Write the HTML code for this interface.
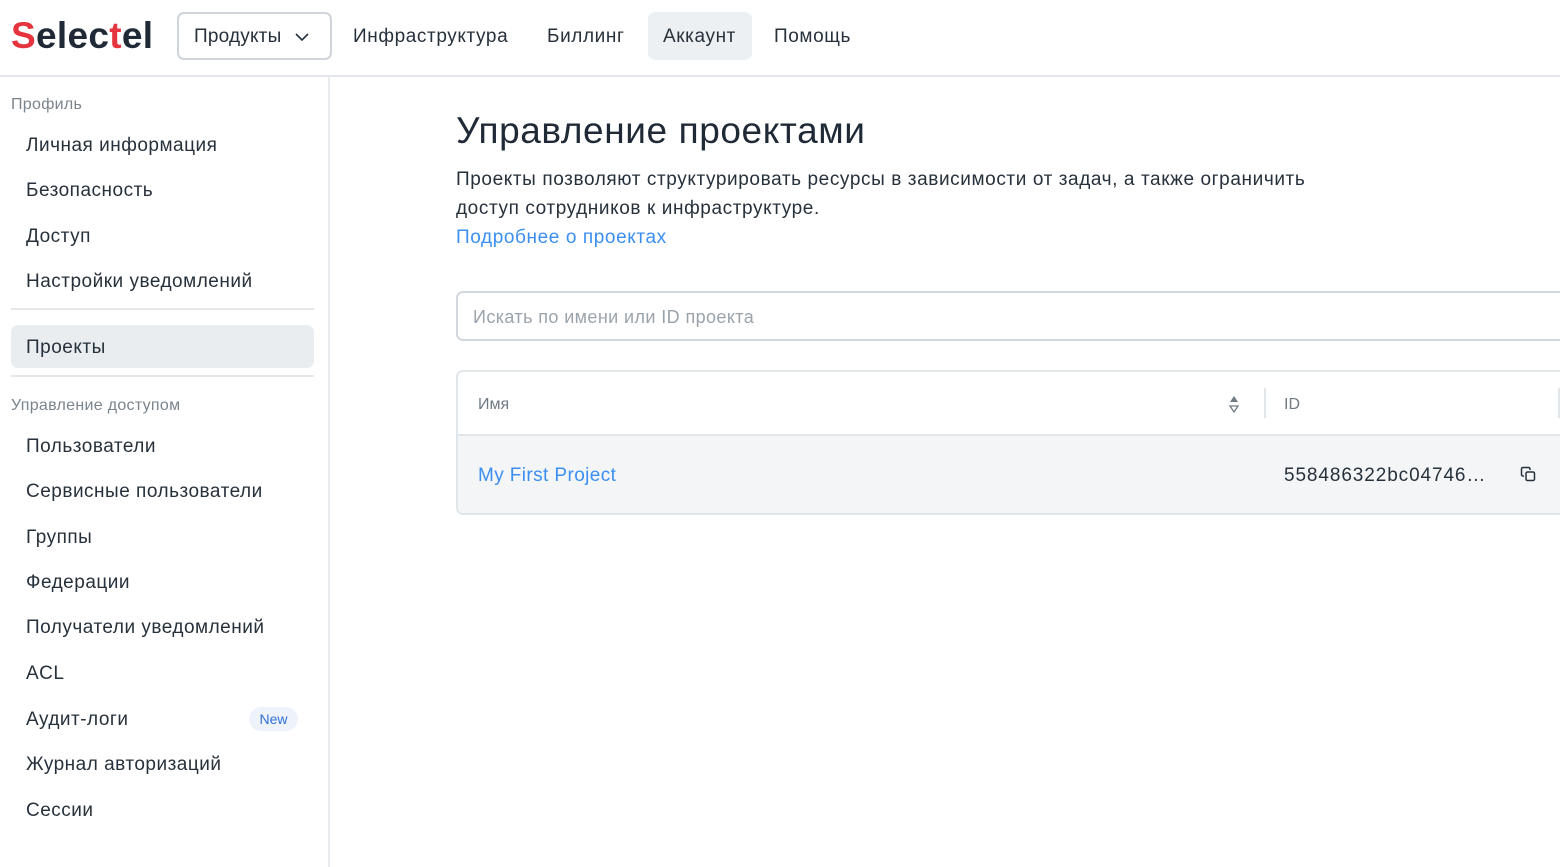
<!DOCTYPE html>
<html><head><meta charset="utf-8"><style>
*{box-sizing:border-box;margin:0;padding:0}
body{width:1560px;height:867px;overflow:hidden;background:#fff;font-family:"Liberation Sans",sans-serif;color:#27313b;position:relative}
.hdr{position:absolute;left:0;top:0;width:1560px;height:77px;border-bottom:2px solid #e4e8ec}
.logo{position:absolute;left:11px;top:15px;font-size:37px;font-weight:bold;color:#1f2a36;letter-spacing:0.3px}
.logo .r{color:#e5343d}
.nav{position:absolute;top:12px;height:48px;font-size:19px;line-height:50px;padding:0 15px;letter-spacing:0.6px}
.prod{left:177px;width:155px;border:2px solid #cfd5db;border-radius:7px;line-height:46px;letter-spacing:0.2px}
.acc{background:#edf0f2;border-radius:7px}
.side{position:absolute;left:0;top:77px;width:330px;height:790px;border-right:2px solid #e8ebee}
.sec{position:absolute;left:11px;font-size:16px;color:#7a848d;letter-spacing:0.3px}
.it{position:absolute;left:26px;font-size:19px;letter-spacing:0.5px}
.line{position:absolute;left:11px;width:303px;height:2px;background:#e4e8ec}
.sel{position:absolute;left:11px;top:248px;width:303px;height:43px;background:#e9edf0;border-radius:7px}
.new{position:absolute;left:249px;top:630px;width:49px;height:24px;border-radius:12px;background:#eef3fb;color:#2f6fd6;font-size:14px;text-align:center;line-height:24px}
h1{position:absolute;left:456px;top:110px;font-size:37px;font-weight:normal;color:#1f2a36;letter-spacing:0.6px}
.p{position:absolute;left:456px;font-size:19px;letter-spacing:0.6px}
.a{color:#3b8ff0}
.search{position:absolute;left:456px;top:291px;width:1120px;height:50px;border:2px solid #d3d9de;border-radius:7px;font-size:18px;color:#9aa3ab;padding:14px 15px;letter-spacing:0.4px}
.tbl{position:absolute;left:456px;top:370px;width:1120px;height:145px;border:2px solid #e1e6ea;border-radius:7px;overflow:hidden}
.th{height:64px;border-bottom:2px solid #e1e6ea;position:relative;font-size:16px;color:#6f7a84}
.tr{height:79px;background:#f3f5f7;position:relative}
</style></head><body>
<div class="hdr">
<div class="logo"><span class="r">S</span>elec<span class="r">t</span>el</div>
<div class="nav prod">Продукты <svg width="14" height="9" style="margin-left:8px" viewBox="0 0 14 9"><path d="M1 1l6 6 6-6" fill="none" stroke="#27313b" stroke-width="1.6"/></svg></div>
<div class="nav" style="left:338px">Инфраструктура</div>
<div class="nav" style="left:532px">Биллинг</div>
<div class="nav acc" style="left:648px;width:104px">Аккаунт</div>
<div class="nav" style="left:759px">Помощь</div>
</div>
<div class="side">
<div class="sec" style="top:19px">Профиль</div>
<div class="it" style="top:58px">Личная информация</div>
<div class="it" style="top:103px">Безопасность</div>
<div class="it" style="top:149px">Доступ</div>
<div class="it" style="top:194px">Настройки уведомлений</div>
<div class="line" style="top:231px"></div>
<div class="sel"></div>
<div class="it" style="top:260px">Проекты</div>
<div class="line" style="top:298px"></div>
<div class="sec" style="top:320px">Управление доступом</div>
<div class="it" style="top:359px">Пользователи</div>
<div class="it" style="top:404px">Сервисные пользователи</div>
<div class="it" style="top:450px">Группы</div>
<div class="it" style="top:495px">Федерации</div>
<div class="it" style="top:540px">Получатели уведомлений</div>
<div class="it" style="top:586px">ACL</div>
<div class="it" style="top:632px">Аудит-логи</div>
<div class="new">New</div>
<div class="it" style="top:677px">Журнал авторизаций</div>
<div class="it" style="top:723px">Сессии</div>
</div>
<h1>Управление проектами</h1>
<div class="p" style="top:169px">Проекты позволяют структурировать ресурсы в зависимости от задач, а также ограничить</div>
<div class="p" style="top:198px">доступ сотрудников к инфраструктуре.</div>
<div class="p a" style="top:227px">Подробнее о проектах</div>
<div class="search">Искать по имени или ID проекта</div>
<div class="tbl">
<div class="th"><span style="position:absolute;left:20px;top:24px">Имя</span>
<svg style="position:absolute;left:770px;top:22px" width="12" height="20" viewBox="0 0 12 20"><path d="M6 2l4 6H2z" fill="#6f7a84"/><path d="M6 18l4-6H2z" fill="none" stroke="#6f7a84" stroke-width="1.3"/></svg>
<div style="position:absolute;left:806px;top:16px;width:2px;height:30px;background:#e1e6ea"></div>
<span style="position:absolute;left:826px;top:24px">ID</span>
<div style="position:absolute;left:1100px;top:16px;width:2px;height:30px;background:#e1e6ea"></div></div>
<div class="tr"><span class="a" style="position:absolute;left:20px;top:29px;font-size:19px;letter-spacing:0.4px">My First Project</span>
<span style="position:absolute;left:826px;top:29px;font-size:19px;letter-spacing:0.9px">558486322bc04746…</span>
<svg style="position:absolute;left:1062px;top:30px" width="16" height="16" viewBox="0 0 16 16"><path d="M4 10H3a1.5 1.5 0 0 1-1.5-1.5V3A1.5 1.5 0 0 1 3 1.5h5.5A1.5 1.5 0 0 1 10 3v1" fill="none" stroke="#27313b" stroke-width="1.5"/><rect x="6" y="6" width="8.5" height="8.5" rx="1.5" fill="none" stroke="#27313b" stroke-width="1.5"/></svg></div>
</div>
</body></html>
